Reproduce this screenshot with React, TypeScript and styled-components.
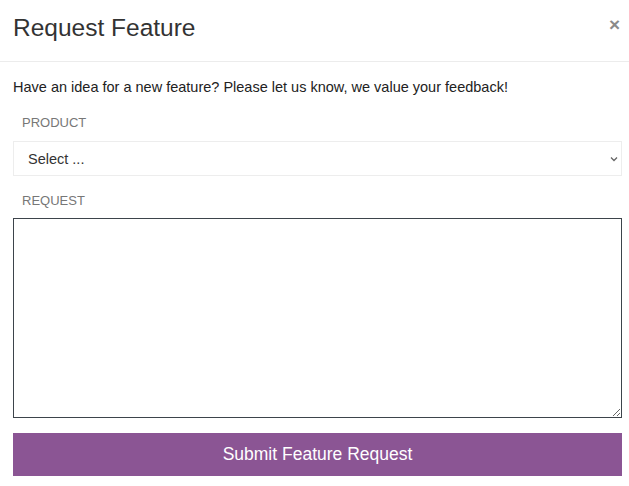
import { FC } from 'react'
import styled, { createGlobalStyle } from 'styled-components'

const GlobalStyle = createGlobalStyle`
  html, body {
    margin: 0;
    padding: 0;
    background: #ffffff;
    font-family: "Liberation Sans", Arial, sans-serif;
  }
  * {
    box-sizing: border-box;
  }
`

const App: FC = () => {
  return (
    <>
      <GlobalStyle />
      <Modal>
        <Header>
          <Title>Request Feature</Title>
          <CloseButton aria-label="close">×</CloseButton>
        </Header>
        <Body>
          <Intro>
            Have an idea for a new feature? Please let us know, we value your
            feedback!
          </Intro>
          <Label htmlFor="product">Product</Label>
          <SelectWrap>
            <Select id="product" defaultValue="">
              <option value="">Select ...</option>
            </Select>
            <Chevron width="8" height="6" viewBox="0 0 8 6">
              <path d="M1 1.5 L4 4.5 L7 1.5" fill="none" stroke="#666" strokeWidth="1.3" />
            </Chevron>
          </SelectWrap>
          <Label htmlFor="request" spaced>
            Request
          </Label>
          <TextArea id="request" />
          <SubmitButton type="button">Submit Feature Request</SubmitButton>
        </Body>
      </Modal>
    </>
  )
}

export default App

const Modal = styled.div`
  width: 629px;
  min-height: 486px;
  background: #ffffff;
`

const Header = styled.div`
  display: flex;
  justify-content: space-between;
  align-items: flex-start;
  height: 62px;
  padding: 14px 9px 0 13px;
  border-bottom: 1px solid #ececec;
`

const Title = styled.h2`
  margin: 0;
  font-size: 24.5px;
  line-height: 28px;
  font-weight: 400;
  color: #333333;
`

const CloseButton = styled.button`
  border: none;
  background: none;
  padding: 0;
  margin-top: 1px;
  font-family: "Liberation Sans", Arial, sans-serif;
  font-size: 19px;
  line-height: 20px;
  font-weight: 700;
  color: #8a8a8a;
  cursor: pointer;
`

const Body = styled.div`
  display: flex;
  flex-direction: column;
  padding: 15px 7px 0 13px;
`

const Intro = styled.p`
  margin: 0;
  font-size: 14.5px;
  line-height: 20px;
  color: #222222;
`

const Label = styled.label<{ spaced?: boolean }>`
  display: block;
  margin: ${(props) => (props.spaced ? '16px' : '17px')} 0
    ${(props) => (props.spaced ? '8px' : '9px')} 9px;
  font-size: 13px;
  line-height: 18px;
  text-transform: uppercase;
  color: #777777;
`

const SelectWrap = styled.div`
  position: relative;
`

const Select = styled.select`
  width: 100%;
  height: 35px;
  padding: 0 30px 0 14px;
  border: 1px solid #ededed;
  border-radius: 0;
  background: #ffffff;
  appearance: none;
  font-family: "Liberation Sans", Arial, sans-serif;
  font-size: 14.5px;
  color: #333333;
  outline: none;
`

const Chevron = styled.svg`
  position: absolute;
  right: 4px;
  top: 15px;
  pointer-events: none;
`

const TextArea = styled.textarea`
  width: 100%;
  height: 200px;
  padding: 8px;
  border: 1px solid #3d444b;
  border-radius: 0;
  font-family: "Liberation Sans", Arial, sans-serif;
  font-size: 14px;
  color: #333333;
  resize: both;
  outline: none;
`

const SubmitButton = styled.button`
  margin-top: 15px;
  width: 100%;
  height: 43px;
  border: none;
  border-radius: 0;
  background: #8b5594;
  color: #ffffff;
  font-family: "Liberation Sans", Arial, sans-serif;
  font-size: 17.5px;
  cursor: pointer;
`
